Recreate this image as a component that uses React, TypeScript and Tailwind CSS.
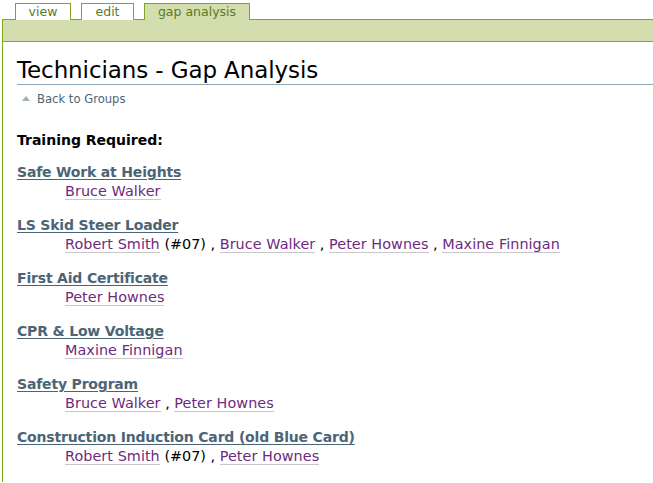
import React from "react";

type Person = { name: string; extra?: string };
const groups: { title: string; people: Person[] }[] = [
  { title: "Safe Work at Heights", people: [{ name: "Bruce Walker" }] },
  {
    title: "LS Skid Steer Loader",
    people: [
      { name: "Robert Smith", extra: "(#07)" },
      { name: "Bruce Walker" },
      { name: "Peter Hownes" },
      { name: "Maxine Finnigan" },
    ],
  },
  { title: "First Aid Certificate", people: [{ name: "Peter Hownes" }] },
  { title: "CPR & Low Voltage", people: [{ name: "Maxine Finnigan" }] },
  { title: "Safety Program", people: [{ name: "Bruce Walker" }, { name: "Peter Hownes" }] },
  {
    title: "Construction Induction Card (old Blue Card)",
    people: [{ name: "Robert Smith", extra: "(#07)" }, { name: "Peter Hownes" }],
  },
];

export default function App() {
  return (
    <div className="w-[653px] h-[483px] overflow-hidden bg-white font-['DejaVu_Sans',sans-serif] text-black">
      <div className="flex items-end h-[20px] pl-[15px] gap-[10px]">
        <div className="w-[56px] h-[17px] border border-b-0 border-[#80a81c] bg-white text-[12.5px] leading-[16px] text-center text-[#5b7a26]">view</div>
        <div className="w-[53px] h-[17px] border border-b-0 border-[#80a81c] bg-white text-[12.5px] leading-[16px] text-center text-[#5b7a26]">edit</div>
        <div className="w-[106px] h-[17px] border border-b-0 border-[#80a81c] bg-[#d3ddad] text-[12.5px] leading-[16px] text-center text-[#5b7a26]">gap analysis</div>
      </div>
      <div className="ml-[2px] border-l border-[#80a81c] h-[463px]">
        <div className="h-[23px] border-t border-b border-[#80a81c] bg-[#d3ddad] -mt-px"></div>
        <div className="pl-[14px] pt-[14px]">
          <h1 className="text-[23px] leading-[28px] tracking-[-0.1px] border-b border-[#8fa8b8]">Technicians - Gap Analysis</h1>
          <div className="flex items-center mt-[6px] text-[11.6px] leading-[16px] text-[#4d6475]">
            <svg width="8" height="6" viewBox="0 0 8 6" className="ml-[5px] mr-[7px]">
              <polygon points="0,5 4,0 8,5" fill="#9fb0bd" />
            </svg>
            Back to Groups
          </div>
          <div className="mt-[24px] text-[14px] leading-[19px] font-bold">Training Required:</div>
          <div className="mt-[13px]">
            {groups.map((g) => (
              <div key={g.title} className="mb-[15px]">
                <div className="text-[14px] leading-[19px] font-bold tracking-[-0.18px] text-[#4b6577] underline underline-offset-2">{g.title}</div>
                <div className="pl-[48px] text-[14.4px] leading-[19px]">
                  {g.people.map((p, i) => (
                    <React.Fragment key={i}>
                      {i > 0 && <span> , </span>}
                      <span className="text-[#6e2a7e] border-b border-[#c8c8c8] tracking-[0.05px]">{p.name}</span>
                      {p.extra && <span> {p.extra}</span>}
                    </React.Fragment>
                  ))}
                </div>
              </div>
            ))}
          </div>
        </div>
      </div>
    </div>
  );
}
